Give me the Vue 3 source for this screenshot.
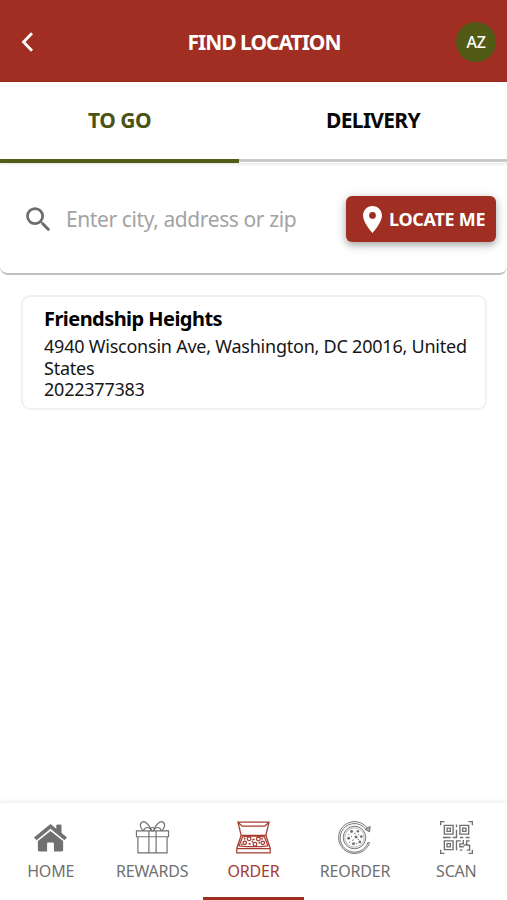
<script setup>
import { ref } from 'vue';

const orderTypes = ['TO GO', 'DELIVERY'];
const activeType = ref('TO GO');
const query = ref('');

const navItems = [
    { id: 'home', label: 'HOME' },
    { id: 'rewards', label: 'REWARDS' },
    { id: 'order', label: 'ORDER' },
    { id: 'reorder', label: 'REORDER' },
    { id: 'scan', label: 'SCAN' }
];
const activeNav = ref('order');

const locations = [
    {
        id: 1,
        name: 'Friendship Heights',
        address: '4940 Wisconsin Ave, Washington, DC 20016, United States',
        phone: '2022377383'
    }
];
</script>

<template>
    <div class="app">
        <header class="header">
            <button class="back" aria-label="Back">
                <svg viewBox="0 0 12 20" fill="none" stroke="currentColor" stroke-width="2.8">
                    <path d="M10.500 1.200L2 10l8.500 8.800" />
                </svg>
            </button>
            <h1 class="title"><span>FIND LOCATION</span></h1>
            <div class="avatar"><span>AZ</span></div>
        </header>

        <!-- Order type tabs -->
        <div class="tabs">
            <button
                v-for="type in orderTypes"
                :key="type"
                class="tab"
                :class="{ active: type === activeType }"
                @click="activeType = type"
            ><span>{{ type }}</span></button>
        </div>

        <!-- Search -->
        <div class="search">
            <svg class="search-icon" viewBox="0 0 24 24" fill="currentColor">
                <path d="M15.500 14h-.79l-.28-.27A6.471 6.471 0 0 0 16 9.500 6.500 6.500 0 1 0 9.500 16c1.610 0 3.090-.59 4.230-1.570l.27.28v.79l5 4.990L20.490 19l-4.990-5zm-6 0C7.010 14 5 11.990 5 9.500S7.010 5 9.500 5 14 7.010 14 9.500 11.990 14 9.500 14z" />
            </svg>
            <input v-model="query" class="search-input" type="text" placeholder="Enter city, address or zip" />
            <button class="locate">
                <svg viewBox="5 2 14 20" fill="currentColor">
                    <path d="M12 2C8.130 2 5 5.130 5 9c0 5.250 7 13 7 13s7-7.750 7-13c0-3.870-3.130-7-7-7zm0 9.500a2.500 2.500 0 1 1 0-5 2.500 2.500 0 0 1 0 5z" />
                </svg>
                <span>LOCATE ME</span>
            </button>
        </div>

        <!-- Locations -->
        <main class="locations">
            <article v-for="item in locations" :key="item.id" class="card">
                <h2 class="card-name">{{ item.name }}</h2>
                <p class="card-address">{{ item.address }}</p>
                <p class="card-phone">{{ item.phone }}</p>
            </article>
        </main>

        <nav class="nav">
            <a
                v-for="item in navItems"
                :key="item.id"
                class="nav-item"
                :class="[item.id, { active: item.id === activeNav }]"
                @click="activeNav = item.id"
            >
                <svg v-if="item.id === 'home'" viewBox="0 0 36 36" fill="currentColor">
                    <path d="M1.600 18L18 4.600l6.500 5.300V5.200h4.300v8.200L34.400 18l-2 2.300L18 8.500 3.600 20.300z" stroke="currentColor" stroke-width="1" stroke-linejoin="round" />
                    <path d="M18 11.200l13 10.500v8.800q0 2-2 2h-7.500v-8.300q0-1-1-1h-5q-1 0-1 1v8.300H7q-2 0-2-2v-8.800z" />
                </svg>

                <svg v-else-if="item.id === 'rewards'" viewBox="0 0 36 36" fill="none" stroke="currentColor" stroke-width="1.200">
                    <path d="M1.500 11.200h33v6h-33zM3 17.200h30v16.600H3zM14.300 11.200h7.400v22.600h-7.400z" />
                    <path d="M16.800 10.500C15 5 10 .2 7 2.300c-3 2.500-.8 6.700 1.500 8.700M16.800 10.500c-2-3-5.400-4.500-8.300.5M19.200 10.500C21 5 26 .2 29 2.300c3 2.500.8 6.700-1.500 8.700M19.200 10.500c2-3 5.400-4.500 8.300.5" />
                    <circle cx="18" cy="9.500" r="1.800" />
                </svg>

                <!-- Open pizza box -->
                <svg v-else-if="item.id === 'order'" viewBox="0 0 36 36" fill="none" stroke="currentColor" stroke-width="1.300">
                    <path d="M2 2.300h32l-3.300 13.600H5.300zM2 2.300l4.500 4h23l4.500-4" />
                    <path d="M5.300 15.900L.8 29v4.700h34.400V29l-4.500-13.100M.8 29.500h34.400" />
                    <path d="M6.800 17.300c7-.8 15.400-.8 22.400 0l3.600 9.200c-9.500 1.200-20 1.200-29.600 0z" />
                    <circle cx="13.500" cy="19.300" r="1.900" />
                    <circle cx="23" cy="19.500" r="1.900" />
                    <circle cx="9" cy="23.500" r="1.800" />
                    <circle cx="19.500" cy="25" r="1.900" />
                    <circle cx="27.500" cy="23.500" r="1.800" />
                    <path d="M17 20.500l2-1M26 19l1.500 1M8.500 20l1-1.200M13 24.200l2 .8M23.500 24l1-1.500M16 22.500l1.500-.5M5.500 25.500l1-1" stroke-width="1.600" />
                </svg>

                <!-- Pizza with a turning arrow -->
                <svg v-else-if="item.id === 'reorder'" viewBox="0 0 36 36" fill="none" stroke="currentColor" stroke-width="1">
                    <path d="M33.500 23.500A16.400 16.400 0 1 1 31 8M31.900 23A14.700 14.700 0 1 1 29.500 9.300M31.900 23l1.600.5" />
                    <path d="M29 9.800l4.500 2.400.7-5.400-3 1.200z" fill="currentColor" fill-opacity=".6" />
                    <circle cx="18" cy="18" r="11.600" />
                    <circle cx="18" cy="18" r="10" stroke-width=".5" />
                    <g fill="currentColor" stroke="none">
                        <circle cx="15" cy="11.800" r="1.500" />
                        <circle cx="21.500" cy="11.500" r="1.300" />
                        <circle cx="19.500" cy="17.500" r="1.500" />
                        <circle cx="12" cy="18.800" r="1.500" />
                        <circle cx="25" cy="17" r="1.400" />
                        <circle cx="17" cy="24.500" r="1.500" />
                        <circle cx="23.500" cy="22.500" r="1.400" />
                    </g>
                    <path d="M11.500 14.500l1.200.8M17.500 14l1.500-.5M14.500 16.500l1 1M22 14.500l.8 1M21 19.500l1.500.5M15.500 21l1.500-.5M12.500 22.500l1 1M20 23.500l.5 1.500" />
                </svg>

                <svg v-else viewBox="0 0 36 36" fill="none" stroke="currentColor" stroke-width="1.400">
                    <path d="M1.700 5.500V1.700h4M30.300 1.700h4v3.800M1.700 30.500v3.800h4M30.300 34.300h4v-3.800" />
                    <path d="M5.500 5.500h9v9h-9zM21.500 5.500h9v9h-9zM5.500 21.500h9v9h-9z" />
                    <path d="M8.300 8.300h3.400v3.400H8.300zM24.300 8.300h3.400v3.400h-3.400zM8.300 24.300h3.400v3.400H8.300z" />
                    <path d="M18 4.500v3M18 10v4.500M4 18h8M14 18h4v-3.500M21.500 18h3.500M27.500 18h4M18 31v-9.500h4.500M25 20.500v4h-3.500v3h4M31.500 21.500h-3v3l-3 2M28 26h3.500v5h-3M21.500 31h2.500" />
                </svg>

                <span class="nav-label">{{ item.label }}</span>
            </a>
        </nav>
    </div>
</template>

<style>
body {
    margin: 0;
    background: #fff;
}
</style>

<style scoped>
.app {
    height: 900px;
    display: flex;
    flex-direction: column;
    background: #fff;
    color: #080808;
    font-family: "Noto Sans", "Open Sans", sans-serif;
    overflow: hidden;
}

button {
    border: 0;
    padding: 0;
    background: none;
    font: inherit;
    color: inherit;
    cursor: pointer;
}

h1,
h2,
p {
    margin: 0;
}

/* Header */
.header {
    height: 82px;
    flex: none;
    display: grid;
    grid-template-columns: 60px 1fr 60px;
    align-items: center;
    box-sizing: border-box;
    padding: 1px 1px 0 11px;
    background: #a02e22;
    color: #fff;
}

.back {
    display: flex;
    padding-left: 10px;
}

.back svg {
    width: 13px;
    height: 20px;
}

.title {
    padding-left: 11px;
    font-size: 21px;
    line-height: 28px;
    font-weight: 700;
    letter-spacing: -1px;
    text-align: center;
}

.avatar {
    width: 40px;
    height: 40px;
    border-radius: 50%;
    justify-self: center;
    display: flex;
    align-items: center;
    justify-content: center;
    background: #525b16;
    font-size: 16px;
    font-weight: 500;
    letter-spacing: -0.4px;
}

/* Tabs */
.tabs {
    height: 81px;
    flex: none;
    display: flex;
    box-shadow: 0 1px 3px rgba(0, 0, 0, 0.12);
}

.tab {
    width: 268px;
    box-sizing: border-box;
    height: 80px;
    padding-bottom: 1px;
    border-bottom: 3px solid #c9c9c9;
    font-size: 21px;
    line-height: 28px;
    font-weight: 700;
    letter-spacing: -0.7px;
}

.tab.active {
    width: 239px;
    height: 81px;
    border-bottom: 4px solid #555c17;
    color: #4a5214;
    letter-spacing: -0.5px;
}

/* Search */
.search {
    height: 112px;
    flex: none;
    box-sizing: border-box;
    display: flex;
    align-items: center;
    padding: 2px 11px 0 22px;
    border-bottom: 2px solid #c0c0c0;
    border-radius: 0 0 8px 8px;
}

.search-icon {
    width: 33px;
    height: 33px;
    flex: none;
    color: #6c6c6c;
}

.search-input {
    flex: 1;
    min-width: 0;
    margin-left: 11px;
    padding: 0 0 1px;
    border: 0;
    outline: none;
    background: none;
    font-family: inherit;
    font-size: 21px;
    letter-spacing: -0.4px;
}

.search-input::placeholder {
    color: #a3a3a3;
    opacity: 1;
}

.locate {
    width: 150px;
    height: 46px;
    flex: none;
    display: flex;
    align-items: center;
    justify-content: flex-start;
    gap: 7px;
    padding-left: 17px;
    box-sizing: border-box;
    border-radius: 6px;
    background: #a02e22;
    color: #fff;
    font-size: 18px;
    font-weight: 700;
    letter-spacing: -0.3px;
    white-space: nowrap;
    box-shadow: 0 3px 7px rgba(0, 0, 0, 0.28), 0 2px 14px rgba(0, 0, 0, 0.12);
}

.locate svg {
    width: 19px;
    height: 27px;
    flex: none;
}

/* Location cards */
.locations {
    flex: 1;
    padding: 20px 20px 0 21px;
}

.card {
    height: 115px;
    box-sizing: border-box;
    padding: 9px 0 0 21px;
    border: 2px solid #f1f1f1;
    border-radius: 9px;
    color: #161616;
}

.card-name {
    margin-bottom: 4px;
    font-size: 20px;
    line-height: 26px;
    font-weight: 700;
    letter-spacing: -0.55px;
    color: #000;
}

.card-address,
.card-phone {
    font-size: 18px;
    line-height: 21.500px;
    letter-spacing: -0.23px;
}

/* Bottom navigation */
.nav {
    height: 97px;
    flex: none;
    display: flex;
    background: #fff;
    box-shadow: 0 -1px 5px rgba(0, 0, 0, 0.09);
}

.nav-item {
    flex: 1;
    box-sizing: border-box;
    display: flex;
    flex-direction: column;
    align-items: center;
    padding-top: 17px;
    border-bottom: 3px solid transparent;
    color: #707070;
    cursor: pointer;
}

.nav-item.active {
    border-bottom-color: #a02e22;
    color: #a83b30;
}

.nav-item svg {
    width: 35px;
    height: 35px;
}

.nav-label {
    margin-top: 5px;
    font-size: 16px;
    line-height: 22px;
    letter-spacing: -0.2px;
}
</style>
